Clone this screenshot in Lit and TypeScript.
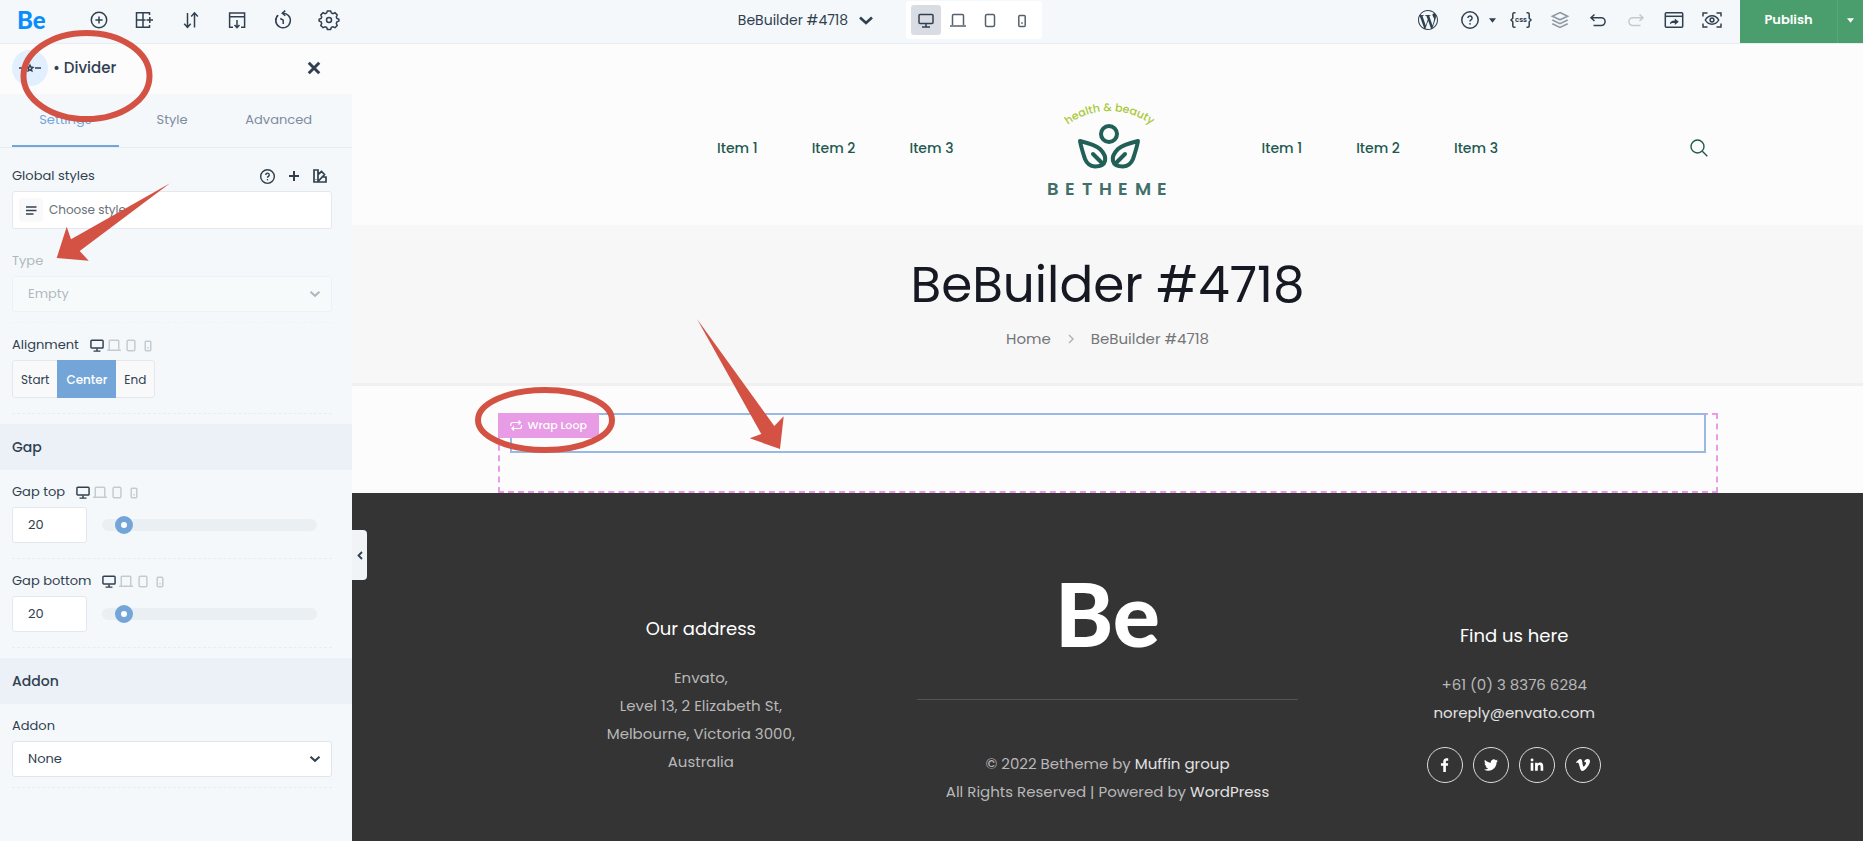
import { LitElement, html, svg, css, TemplateResult } from "lit";
import { customElement, property, state } from "lit/decorators.js";
import { classMap } from "lit/directives/class-map.js";

type Shape = ReturnType<typeof svg>;

const icon = (box: string, w: number, h: number, body: Shape): TemplateResult =>
  html`<svg class="icon" viewBox=${box} width=${w} height=${h} aria-hidden="true">${body}</svg>`;

const shapes = {
  add: svg`<circle cx="10" cy="10" r="7.7"/><path d="M10 6.4v7.2M6.4 10h7.2"/>`,
  blocks: svg`<path d="M14.5 5V2.700H1.500v14.600h13V15M8 2.700v14.600M1.500 10h9M11.500 10h6.500M14.800 7v6"/>`,
  sort: svg`<path d="M6.500 3v14.200M3.200 13.800l3.300 3.500 3.200-3.500M13.500 17.500V3M10.200 6.400l3.300-3.600 3.300 3.600"/>`,
  insert: svg`<path d="M6 17.300H2.600V3h15v14.300H14M2.600 6.800h15M10 10v7.500M7.500 15l2.500 2.700 2.500-2.700"/>`,
  history: svg`<path d="M9.300 3.200A7.300 7.300 0 1 1 5 5.200"/><path d="M5 5.200A7.300 7.300 0 0 0 3 12.500" stroke-dasharray="2 1.500"/><path d="M12.300.6 9.300 3.200l3 2.600M7.300 8.500l2.900 1.700v3.900"/>`,
  gear: svg`<circle cx="10" cy="10" r="2.500"/><path d="M8.400 1h3.200l.8 2 1.500.6 2.100-.9 2.200 2.200-.9 2.100.6 1.500 2 .8v1.800l-2 .8-.6 1.500.9 2.100-2.200 2.200-2.100-.9-1.500.6-.8 2H8.400l-.8-2-1.500-.6-2.100.9-2.200-2.200.9-2.100-.6-1.500-2-.8V9.300l2-.8.6-1.500-.9-2.100L4 2.700l2.100.9L7.600 3z"/>`,
  chevronDown: svg`<path d="m1.500 1.800 4.500 4 4.500-4"/>`,
  help: svg`<circle cx="10" cy="10" r="8.200"/><path d="M7.900 8.100a2.100 2.100 0 1 1 3 1.900c-.6.300-.9.700-.9 1.400"/><circle class="solid" cx="10" cy="13.800" r=".9"/>`,
  layers: svg`<path d="m10 2.500 7.700 3.700L10 9.800 2.300 6.200zM2.300 10 10 13.700 17.700 10M2.300 13.700 10 17.400l7.700-3.700"/>`,
  undo: svg`<path d="M6.500 4.500 3 7.700 6.500 11M3.200 7.700h10a3.900 3.900 0 0 1 0 7.800H5.500"/>`,
  redo: svg`<path d="M13.500 4.500 17 7.700 13.500 11M16.800 7.700h-10a3.900 3.900 0 0 0 0 7.800h7.700"/>`,
  preview: svg`<rect x="1.300" y="2.700" width="17.400" height="14.600" rx="1"/><path d="M1.300 6.300h17.400"/><path class="solid" d="M5.800 14.300c.2-2.600 1.800-3.700 5-3.700V8.600l4 3.200-4 3.200v-2c-2.500-.1-3.800.2-5 1.300z"/>`,
  view: svg`<path d="M1 6.500V3h4.500M14.500 3H19v3.500M19 13.500V17h-4.500M5.500 17H1v-3.500M3.300 10c3.200-5.600 10.200-5.600 13.400 0-3.200 5.600-10.200 5.600-13.400 0z"/><circle cx="10" cy="10" r="1.900"/>`,
  wordpress: svg`<path class="logo" d="M21.469 6.825c.84 1.537 1.318 3.300 1.318 5.175 0 3.979-2.156 7.456-5.363 9.325l3.295-9.527c.615-1.540.820-2.771.820-3.864 0-.405-.026-.780-.070-1.110m-7.981.105c.647-.030 1.232-.105 1.232-.105.582-.075.514-.930-.067-.899 0 0-1.755.135-2.880.135-1.064 0-2.850-.150-2.850-.150-.585-.030-.661.855-.075.885 0 0 .540.061 1.125.090l1.680 4.605-2.370 7.080L5.354 6.900c.649-.030 1.234-.100 1.234-.100.585-.075.516-.930-.065-.896 0 0-1.746.138-2.874.138-.200 0-.438-.008-.690-.015C4.911 3.150 8.235 1.215 12 1.215c2.809 0 5.365 1.072 7.286 2.833-.046-.003-.091-.009-.141-.009-1.060 0-1.812.923-1.812 1.914 0 .890.513 1.643 1.060 2.531.411.720.890 1.643.890 2.977 0 .915-.354 1.994-.821 3.479l-1.075 3.585-3.900-11.610.001.014zM12 22.784c-1.059 0-2.081-.153-3.048-.437l3.237-9.406 3.315 9.087c.024.053.050.101.078.149-1.120.393-2.325.609-3.582.609M1.211 12c0-1.564.336-3.050.935-4.390L7.290 21.709C3.694 19.960 1.212 16.271 1.211 12M12 0C5.385 0 0 5.385 0 12s5.385 12 12 12 12-5.385 12-12S18.615 0 12 0"/>`,
  css: svg`<path d="M5.500 2.800H4.300A1.500 1.500 0 0 0 2.800 4.300v3.900L1 10l1.800 1.800v3.900a1.500 1.500 0 0 0 1.500 1.500h1.200M16.500 2.800h1.200a1.500 1.500 0 0 1 1.500 1.500v3.900L21 10l-1.800 1.800v3.900a1.500 1.500 0 0 1-1.500 1.500h-1.200"/><text class="css-label" x="11" y="12" text-anchor="middle">css</text>`,
  divider: svg`<path d="M0 5h6M16 5h6M11 2.300l.9 1.800 2 .3-1.500 1.400.4 2-1.800-1-1.800 1 .4-2-1.500-1.400 2-.3z"/>`,
  close: svg`<path d="m1.500 1.500 9 9M10.500 1.500l-9 9"/>`,
  plus: svg`<path d="M5 0v10M0 5h10"/>`,
  swatch: svg`<path d="M1 1h4v12H1zM5 5.500 8.500 2.500l3 3L5 12.500M9.500 8H13v5H4"/><circle class="solid" cx="3" cy="10.500" r=".6"/>`,
  lines: svg`<path d="M0 1h10.500M0 4.500h10.500M0 8h7.500"/>`,
  loop: svg`<path d="M.8 6V4.500A2 2 0 0 1 2.800 2.500h7M8.500.5l2 2-2 2M11.500 5v1.500a2 2 0 0 1-2 2h-7M4 6.500l-2 2 2 2"/>`,
  crumb: svg`<path d="m1 1 4 4-4 4"/>`,
  search: svg`<circle cx="7.500" cy="7.500" r="6.500"/><path d="m12.300 12.300 5 5"/>`,
  caret: svg`<path class="solid" d="M0 0h8L4 5z"/>`,
  collapse: svg`<path d="M5 1 1.500 4.500 5 8"/>`,
};

const devices: Record<string, Shape> = {
  Desktop: svg`<rect x="1" y="1.500" width="14" height="9" rx="1"/><path d="M8 11v2.500M4 14h8" class="foot"/>`,
  Laptop: svg`<path d="M2.500 12V2.500a1 1 0 0 1 1-1h9a1 1 0 0 1 1 1V12M0 13h16"/>`,
  Tablet: svg`<rect x="3.500" y="1.500" width="9" height="12" rx="1.500"/>`,
  Mobile: svg`<rect x="4.800" y="2.500" width="6.400" height="11" rx="1"/><path d="M7.200 10h1.600"/>`,
};

const socials: Array<[string, Shape]> = [
  ["Facebook", svg`<path d="M9 24V13.500H5V9h4V6.500C9 2.600 11.200.5 14.600.5c1.500 0 2.900.2 2.900.2v3.900h-2c-1.600 0-2 1-2 2V9h4l-.6 4.500h-3.400V24z"/>`],
  ["Twitter", svg`<path d="M23.953 4.570a10 10 0 0 1-2.825.775 4.958 4.958 0 0 0 2.163-2.723c-.951.555-2.005.959-3.127 1.184a4.920 4.920 0 0 0-8.384 4.482C7.690 8.095 4.067 6.130 1.640 3.162a4.822 4.822 0 0 0-.666 2.475c0 1.710.870 3.213 2.188 4.096a4.904 4.904 0 0 1-2.228-.616v.060a4.923 4.923 0 0 0 3.946 4.827 4.996 4.996 0 0 1-2.212.085 4.936 4.936 0 0 0 4.604 3.417 9.867 9.867 0 0 1-6.102 2.105c-.390 0-.779-.023-1.170-.067a13.995 13.995 0 0 0 7.557 2.209c9.053 0 13.998-7.496 13.998-13.985 0-.210 0-.420-.015-.630A9.935 9.935 0 0 0 24 4.590z"/>`],
  ["LinkedIn", svg`<path d="M6 3.500a2.500 2.500 0 1 1-5 0 2.500 2.500 0 0 1 5 0zM1.200 8h4.500v14H1.200V8zm7.500 0H13v1.900h.1c.6-1.100 2-2.300 4.200-2.300 4.500 0 5.400 3 5.400 6.900V22h-4.500v-6.600c0-1.600 0-3.600-2.200-3.600s-2.600 1.700-2.600 3.500V22H8.700V8z"/>`],
  ["Vimeo", svg`<path d="M23.977 6.417c-.105 2.338-1.739 5.543-4.894 9.609-3.268 4.247-6.026 6.370-8.290 6.370-1.409 0-2.578-1.294-3.553-3.881l-1.918-7.114c-.719-2.584-1.488-3.878-2.312-3.878-.179 0-.806.378-1.881 1.132L0 7.198a315 315 0 0 0 3.501-3.128C5.080 2.702 6.266 1.985 7.055 1.911c1.867-.180 3.016 1.100 3.447 3.838.465 2.953.789 4.789.971 5.507.539 2.450 1.131 3.674 1.776 3.674.502 0 1.256-.796 2.265-2.385 1.004-1.589 1.540-2.797 1.612-3.628.144-1.371-.395-2.061-1.614-2.061-.574 0-1.167.121-1.777.391 1.186-3.868 3.434-5.757 6.762-5.637 2.473.060 3.628 1.664 3.493 4.797z"/>`],
];

const base = css`
  * { box-sizing: border-box; }
  button, input, select { font: inherit; color: inherit; margin: 0; }
  button { background: none; border: 0; padding: 0; cursor: pointer; display: inline-flex; align-items: center; justify-content: center; }
  a { color: inherit; text-decoration: none; }
  h1, h2, h3, p { margin: 0; font-weight: inherit; font-size: inherit; }
  .icon { display: block; flex: none; fill: none; stroke: currentColor; stroke-width: 1.5; overflow: visible; }
  .solid, .logo { fill: currentColor; stroke: none; }
`;

@customElement("be-topbar")
export class BeTopbar extends LitElement {
  @state() private device = "Desktop";

  static styles = [base, css`
    :host { display: grid; grid-template-columns: 352px 1fr auto; height: 44px; background: #f4f8fa; border-bottom: 1px solid #e6edf4; color: #304050; }
    .tools { display: flex; align-items: center; gap: 26px; padding: 0 0 3px 17px; }
    .brand { font: 900 24px/30px Lato, sans-serif; color: #0a8cfa; width: 46px; }
    .tool { width: 20px; height: 20px; }
    .middle { display: flex; align-items: center; justify-content: center; gap: 32px; padding: 0 0 3px 10px; }
    .page { gap: 10px; font-size: 14px; line-height: 20px; }
    .page .icon { stroke-width: 2; }
    .devices { display: flex; gap: 2px; padding: 4px 5px; background: #fff; border-radius: 3px; }
    .device { width: 30px; height: 30px; border-radius: 3px; color: #55616e; }
    .device.on { background: #d9dde3; color: #304050; }
    .actions { display: flex; gap: 18px; }
    .actions > button { height: 40px; }
    .help { gap: 9px; margin: 0 -4px 0 4px; }
    .faded { color: #8e98a3; }
    .off { color: #c3c9cf; }
    .css-label { font: 700 7px/8px Inter, sans-serif; fill: currentColor; stroke: none; }
    .publish { display: flex; background: #4a9d6d; color: #fff; }
    .publish button { padding-bottom: 3px; }
    .go { width: 97px; font-weight: 600; font-size: 13px; }
    .more { width: 26px; border-left: 1px solid #58a679; }
  `];

  render() {
    const tool = (label: string, s: Shape) =>
      html`<button class="tool" aria-label=${label}>${icon("0 0 20 20", 20, 20, s)}</button>`;
    return html`
      <div class="tools">
        <a class="brand" href="#">Be</a>
        ${tool("Add element", shapes.add)} ${tool("Pre-built sections", shapes.blocks)}
        ${tool("Navigator", shapes.sort)} ${tool("Import and export", shapes.insert)}
        ${tool("History", shapes.history)} ${tool("Settings", shapes.gear)}
      </div>
      <div class="middle">
        <button class="page">BeBuilder #4718 ${icon("0 0 12 8", 16, 11, shapes.chevronDown)}</button>
        <div class="devices">
          ${Object.entries(devices).map(([name, s]) => html`
            <button class=${classMap({ device: true, on: this.device === name })} aria-label=${name}
              @click=${() => (this.device = name)}>${icon("0 0 16 15", 16, 15, s)}</button>`)}
        </div>
      </div>
      <div class="actions">
        <button aria-label="WordPress">${icon("0 0 24 24", 20, 20, shapes.wordpress)}</button>
        <button class="help" aria-label="Help">${icon("0 0 20 20", 20, 20, shapes.help)} ${icon("0 0 8 5", 7, 5, shapes.caret)}</button>
        <button aria-label="Custom CSS">${icon("0 0 22 20", 22, 20, shapes.css)}</button>
        <button class="faded" aria-label="Layers">${icon("0 0 20 20", 20, 20, shapes.layers)}</button>
        <button aria-label="Undo">${icon("0 0 20 20", 20, 20, shapes.undo)}</button>
        <button class="off" aria-label="Redo">${icon("0 0 20 20", 20, 20, shapes.redo)}</button>
        <button aria-label="Preview">${icon("0 0 20 20", 20, 20, shapes.preview)}</button>
        <button aria-label="View page">${icon("0 0 20 20", 20, 20, shapes.view)}</button>
        <div class="publish">
          <button class="go">Publish</button>
          <button class="more" aria-label="More options">${icon("0 0 8 5", 7, 5, shapes.caret)}</button>
        </div>
      </div>`;
  }
}

@customElement("device-switch")
export class DeviceSwitch extends LitElement {
  @state() private active = "Desktop";

  static styles = [base, css`
    :host { display: flex; gap: 3px; }
    button { width: 14px; height: 14px; color: #c3cbd2; }
    button.on { color: #304050; }
    .icon { stroke-width: 1.7; }
  `];

  render() {
    return Object.entries(devices).map(([name, s]) => html`
      <button class=${classMap({ on: this.active === name })} aria-label=${name}
        @click=${() => (this.active = name)}>${icon("0 0 16 15", 14, 13, s)}</button>`);
  }
}

@customElement("gap-field")
export class GapField extends LitElement {
  @property() label = "";
  @state() private value = 20;

  static styles = [base, css`
    :host { display: block; }
    .head { display: flex; align-items: center; gap: 11px; line-height: 20px; margin-bottom: 5px; }
    .row { display: flex; align-items: center; gap: 15px; padding-right: 15px; }
    .number { width: 75px; height: 36px; border: 1px solid #e2e8ed; border-radius: 3px; background: #fff; padding: 0 15px; }
    .range { flex: 1; min-width: 0; appearance: none; height: 12px; border-radius: 6px; background: #eaeff4; }
    .range::-webkit-slider-thumb { appearance: none; width: 18px; height: 18px; border-radius: 50%; border: 6px solid #73a5d8; background: #fff; }
  `];

  render() {
    const change = (e: Event) => (this.value = Number((e.target as HTMLInputElement).value));
    return html`
      <div class="head"><label for="amount">${this.label}</label><device-switch></device-switch></div>
      <div class="row">
        <input class="number" id="amount" type="text" inputmode="numeric" .value=${String(this.value)} @change=${change} />
        <input class="range" type="range" min="0" max="300" aria-label=${this.label} .value=${String(this.value)} @input=${change} />
      </div>`;
  }
}

@customElement("be-sidebar")
export class BeSidebar extends LitElement {
  @state() private tab = "Settings";
  @state() private align = "Center";

  static styles = [base, css`
    :host { display: block; background: #f4f8fa; color: #304050; font-size: 13px; line-height: 20px; }
    .title { display: flex; align-items: center; gap: 5px; height: 50px; padding: 0 31px 2px 12px; background: #fcfcfd; }
    .badge { width: 36px; height: 36px; border-radius: 50%; background: #e1efff; display: grid; place-items: center; }
    .title h2 { flex: 1; font-size: 15px; font-weight: 500; }
    .close .icon { stroke-width: 2.5; }
    .tabs { display: grid; grid-template-columns: repeat(3, 1fr); height: 54px; padding: 0 20px 0 12px; border-bottom: 1px solid #e6ecf0; }
    .tab { color: #7e8ba0; font-size: 13px; border-bottom: 2px solid transparent; }
    .tab.on { color: #73a5d8; border-color: #73a5d8; }
    .field { margin: 0 20px 0 12px; padding: 12px 0 15px; border-bottom: 1px dashed #e8edf1; }
    .field.close-fit { padding-bottom: 10px; }
    .styles { padding: 18px 0 22px; border: 0; }
    .head { display: flex; align-items: center; gap: 11px; margin-bottom: 5px; }
    .head.spread { justify-content: space-between; padding-right: 5px; }
    .extras { display: flex; align-items: center; gap: 14px; }
    .extras .icon { stroke-width: 1.7; }
    .extras .plus { stroke-width: 2; }
    .choose { width: 100%; height: 38px; border: 1px solid #e2e8ed; border-radius: 3px; background: #fff; justify-content: flex-start; gap: 6px; padding-left: 6px; font-size: 12px; color: #66717c; }
    .mark { width: 24px; height: 24px; border-radius: 3px; background: #f9f9fa; display: grid; place-items: center; color: #304050; }
    .field.type { padding-top: 0; border-color: #f0f3f5; }
    .type label { opacity: 0.35; }
    .type .pick { opacity: 0.35; }
    .pick { display: grid; align-items: center; }
    .pick > * { grid-area: 1 / 1; }
    .pick select { appearance: none; width: 100%; height: 36px; border: 1px solid #dfe5ea; border-radius: 3px; background: #fff; padding: 0 15px; opacity: 1; }
    .pick .icon { justify-self: end; margin-right: 11px; pointer-events: none; stroke-width: 2; }
    .aligns { display: inline-flex; height: 38px; border: 1px solid #e2e8ed; border-radius: 3px; background: #f9f9fa; font-size: 12px; vertical-align: top; }
    .aligns button { padding: 1px 8px 0; }
    .aligns .on { background: #73a5d8; color: #fff; font-weight: 500; margin: -1px 0; padding: 1px 9px 0; }
    .section { margin-top: 10px; height: 46px; padding: 13px 12px; background: #ebf1f6; font-size: 14px; font-weight: 500; }
  `];

  render() {
    return html`
      <header class="title">
        <span class="badge">${icon("0 0 22 10", 22, 10, shapes.divider)}</span>
        <h2>• Divider</h2>
        <button class="close" aria-label="Close">${icon("0 0 12 12", 14, 14, shapes.close)}</button>
      </header>
      <nav class="tabs">
        ${["Settings", "Style", "Advanced"].map((t) => html`
          <button class=${classMap({ tab: true, on: this.tab === t })} @click=${() => (this.tab = t)}>${t}</button>`)}
      </nav>
      <div class="field styles">
        <div class="head spread">
          <label for="styles">Global styles</label>
          <span class="extras">
            <button aria-label="Help">${icon("1 1 18 18", 15, 15, shapes.help)}</button>
            <button aria-label="Add style"><svg class="icon plus" viewBox="0 0 10 10" width="10" height="10">${shapes.plus}</svg></button>
            <button aria-label="Manage styles">${icon("0 0 14 14", 14, 14, shapes.swatch)}</button>
          </span>
        </div>
        <button class="choose" id="styles"><span class="mark">${icon("0 0 11 9", 11, 9, shapes.lines)}</span>Choose style</button>
      </div>
      <div class="field type close-fit">
        <div class="head"><label for="type">Type</label></div>
        <div class="pick"><select id="type" disabled><option>Empty</option></select>${icon("0 0 12 8", 12, 8, shapes.chevronDown)}</div>
      </div>
      <div class="field">
        <div class="head"><span id="align">Alignment</span><device-switch></device-switch></div>
        <div class="aligns" role="group" aria-labelledby="align">
          ${["Start", "Center", "End"].map((a) => html`
            <button class=${classMap({ on: this.align === a })} @click=${() => (this.align = a)}>${a}</button>`)}
        </div>
      </div>
      <h3 class="section">Gap</h3>
      <gap-field class="field" label="Gap top"></gap-field>
      <gap-field class="field" label="Gap bottom"></gap-field>
      <h3 class="section">Addon</h3>
      <div class="field close-fit">
        <div class="head"><label for="addon">Addon</label></div>
        <div class="pick"><select id="addon"><option>None</option><option>Icon</option></select>${icon("0 0 12 8", 12, 8, shapes.chevronDown)}</div>
      </div>`;
  }
}

@customElement("be-canvas")
export class BeCanvas extends LitElement {
  static styles = [base, css`
    :host { display: flex; flex-direction: column; position: relative; background: #fcfcfc; min-width: 0; font-size: 15px; line-height: 28px; }
    .wide { width: 100%; max-width: 1220px; margin: 0 auto; }
    .site-head { display: grid; grid-template-columns: 1fr auto 1fr; align-items: center; gap: 83px; height: 181px; padding: 26px 10px 0; color: #1f5a52; }
    .menu { display: flex; gap: 54px; font-weight: 500; font-size: 14px; }
    .left { justify-content: flex-end; }
    .right { display: flex; justify-content: space-between; align-items: center; }
    .search .icon { stroke-width: 1.400; }
    .mark { display: block; margin-top: 3px; overflow: visible; }
    .leaf { fill: none; stroke: #215f57; stroke-width: 4; stroke-linejoin: round; stroke-linecap: round; }
    .arc { font: 500 11px/12px Poppins, Inter, sans-serif; fill: #a8c93a; }
    .name { font: 600 18px/20px Poppins, Inter, sans-serif; fill: #41706a; }
    .banner { background: #f7f7f7; border-bottom: 3px solid #f0f0f0; height: 161px; padding-top: 29px; text-align: center; }
    .banner h1 { font-size: 50px; line-height: 62px; color: #161922; }
    .crumbs { display: flex; justify-content: center; align-items: center; gap: 17px; margin-top: 9px; color: #757577; }
    .crumbs .icon { color: #b5b5b7; }
    .wrap { position: relative; margin-top: 27px; height: 80px; border: 2px dashed #e79ce5; padding: 0 10px; }
    .item { height: 40px; margin-top: -2px; border: 2px solid #97b9e4; }
    .tag { position: absolute; left: -2px; top: -2px; height: 25px; padding: 0 12px 1px; gap: 6px; background: #e79ce5; color: #fff; font-size: 11px; line-height: 16px; font-weight: 500; }
    .tag .icon { stroke-width: 1.200; }
    .foot { flex: 1; background: #343435; color: #b8b8b8; text-align: center; }
    .cols { display: grid; grid-template-columns: repeat(3, 1fr); }
    .cols h3 { color: #fff; font-size: 18px; margin-bottom: 21px; }
    .cols a { color: #e2e2e2; }
    .address { padding-top: 122px; }
    .about { padding: 81px 13px 0; }
    .big { font: 900 88px/78px Lato, sans-serif; color: #fff; }
    .about hr { border: 0; border-top: 1px solid #535355; margin: 47px 0 50px; }
    .contact { padding-top: 129px; }
    .socials { display: flex; justify-content: center; gap: 10px; margin-top: 20px; }
    .social { width: 36px; height: 36px; border: 1px solid #e2dada; border-radius: 50%; display: grid; place-items: center; }
    .social .icon { fill: #fff; stroke: none; }
    .handle { position: absolute; left: 0; top: 486px; width: 15px; height: 50px; background: #f1f4f7; border-radius: 0 4px 4px 0; color: #304050; }
    .handle .icon { stroke-width: 1.800; }
  `];

  render() {
    const links = html`<a href="#">Item 1</a><a href="#">Item 2</a><a href="#">Item 3</a>`;
    return html`
      <header class="site-head wide">
        <nav class="menu left">${links}</nav>
        <a href="#" aria-label="Betheme">
          <svg class="mark" viewBox="-10 -8 142 114" width="142" height="114">
            <path id="arc" fill="none" d="M18 27A70 70 0 0 1 107 27"/>
            <text class="arc" text-anchor="middle"><textPath href="#arc" startOffset="50%">health &amp; beauty</textPath></text>
            <circle class="leaf" cx="62" cy="34" r="8"/>
            <path class="leaf" d="M33 41C45 44 50 46 53 49C57 53 59 57 58 61C57 65 53 66.500 48 66.500C43 66 40 64 38 59C36 53 34 47 33 41ZM46 54L56 64"/>
            <path class="leaf" d="M91 41C79 44 74 46 71 49C67 53 65 57 66 61C67 65 71 66.500 76 66.500C81 66 84 64 86 59C88 53 90 47 91 41ZM78 54L68 64"/>
            <text class="name" x="0 18 35 52 71 88 110" y="95">BETHEME</text>
          </svg>
        </a>
        <div class="right">
          <nav class="menu">${links}</nav>
          <button class="search" aria-label="Search">${icon("0 0 18 18", 18, 18, shapes.search)}</button>
        </div>
      </header>
      <section class="banner">
        <h1>BeBuilder #4718</h1>
        <nav class="crumbs"><a href="#">Home</a>${icon("0 0 6 10", 6, 10, shapes.crumb)}<span>BeBuilder #4718</span></nav>
      </section>
      <section class="wrap wide">
        <div class="item"></div>
        <button class="tag">${icon("0 0 12 11", 12, 11, shapes.loop)}Wrap Loop</button>
      </section>
      <footer class="foot">
        <div class="cols wide">
          <div class="address">
            <h3>Our address</h3>
            <p>Envato,<br />Level 13, 2 Elizabeth St,<br />Melbourne, Victoria 3000,<br />Australia</p>
          </div>
          <div class="about">
            <div class="big">Be</div>
            <hr />
            <p>© 2022 Betheme by <a href="#">Muffin group</a><br />All Rights Reserved | Powered by <a href="#">WordPress</a></p>
          </div>
          <div class="contact">
            <h3>Find us here</h3>
            <p>+61 (0) 3 8376 6284<br /><a href="#">noreply@envato.com</a></p>
            <div class="socials">
              ${socials.map(([name, s]) => html`<a class="social" href="#" aria-label=${name}>${icon("0 0 24 24", 14, 14, s)}</a>`)}
            </div>
          </div>
        </div>
      </footer>
      <button class="handle" aria-label="Collapse panel">${icon("0 0 6 9", 6, 9, shapes.collapse)}</button>`;
  }
}

@customElement("app-root")
export class AppRoot extends LitElement {
  static styles = [base, css`
    :host { display: flex; flex-direction: column; position: relative; min-height: 100vh; font-family: Poppins, Inter, sans-serif; }
    .body { flex: 1; display: grid; grid-template-columns: 352px 1fr; }
    .notes { position: absolute; left: 0; top: 0; width: 800px; height: 500px; pointer-events: none; }
    .ring { fill: none; stroke: #d35244; stroke-width: 6; }
    .arrow { fill: #d35244; }
  `];

  render() {
    return html`
      <be-topbar></be-topbar>
      <div class="body"><be-sidebar></be-sidebar><be-canvas></be-canvas></div>
      <svg class="notes" viewBox="0 0 800 500" aria-hidden="true">
        <ellipse class="ring" cx="86.500" cy="76" rx="63" ry="43"/>
        <ellipse class="ring" cx="545" cy="420" rx="67" ry="30"/>
        <path class="arrow" d="M170 183.300 71 239.300 66.700 226.700 56.700 258 88.700 260.700 79.700 251z"/>
        <path class="arrow" d="M697 319 774.300 426 783.700 416.300 780 449 749.700 438.300 761.300 434z"/>
      </svg>`;
  }
}
